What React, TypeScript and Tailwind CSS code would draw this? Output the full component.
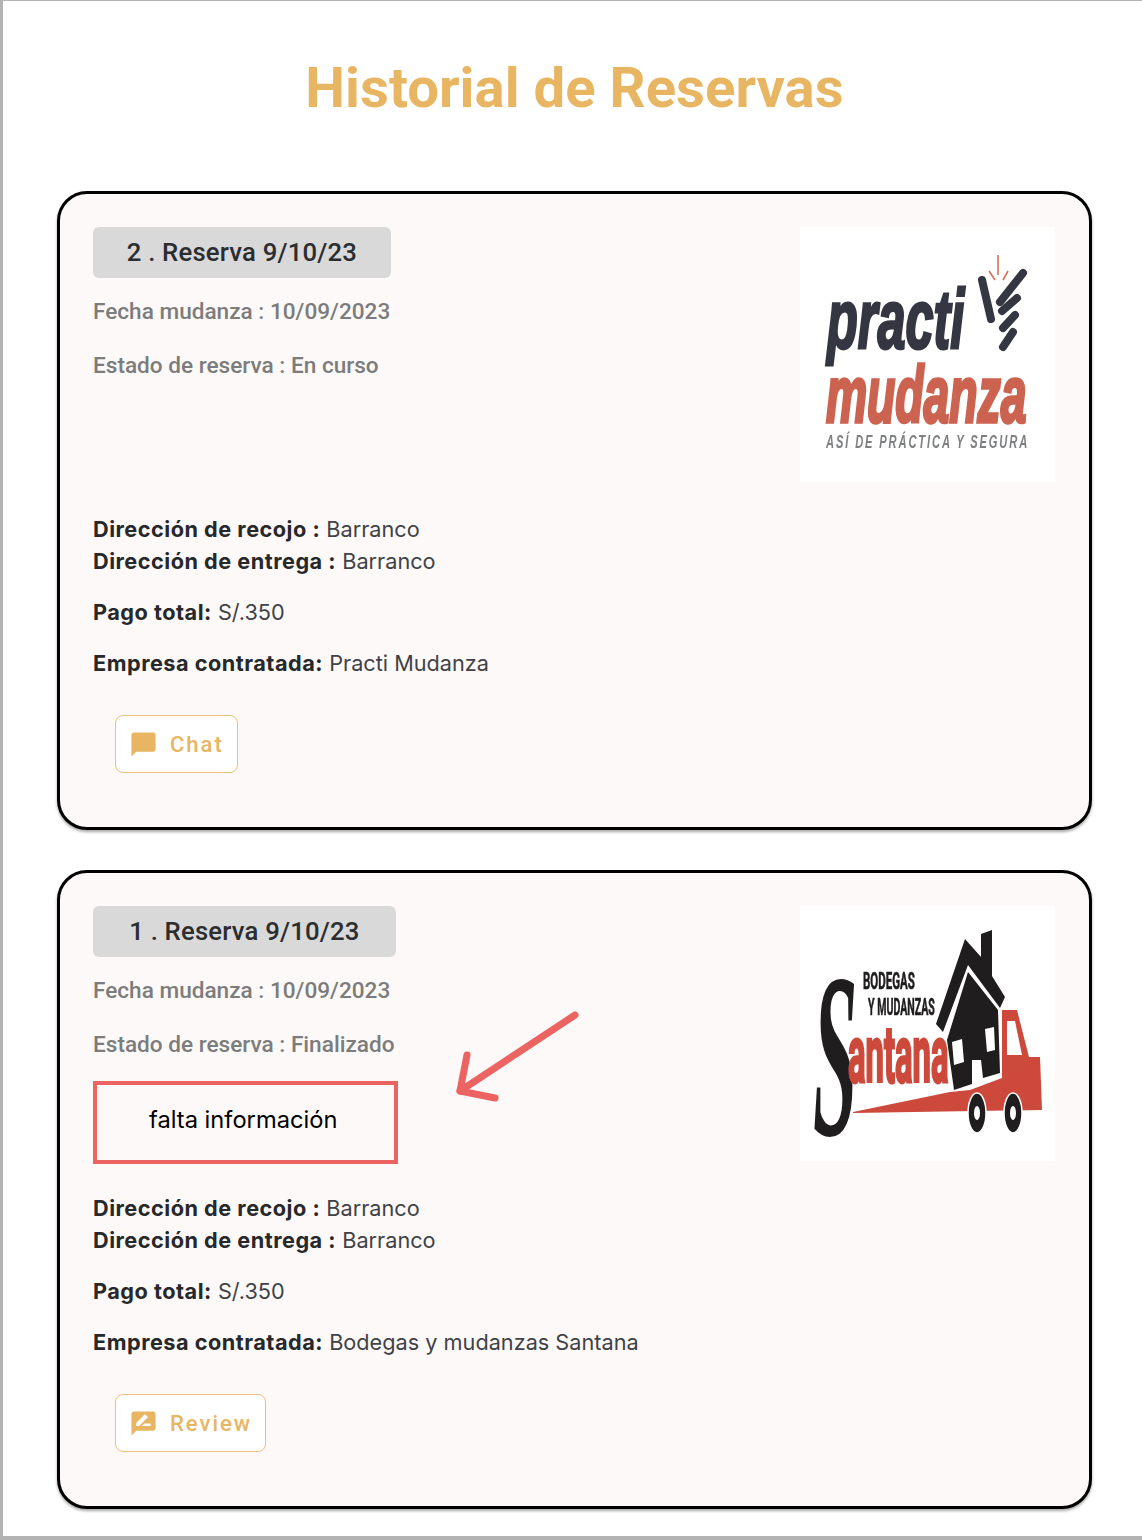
import { MdChatBubble, MdRateReview } from "react-icons/md";
import type { ReactNode } from "react";

function PractiLogo() {
  return (
    <svg viewBox="0 0 255 255" className="h-full w-full blur-[0.4px]">
      <rect width="255" height="255" fill="#fff" />
      <text transform="translate(27 121) scale(0.6 1)" fontFamily="Liberation Sans" fontWeight="700" fontStyle="italic" fontSize="84" fill="#343642" stroke="#343642" strokeWidth="3">practi</text>
      <text transform="translate(26 195) scale(0.578 1)" fontFamily="Liberation Sans" fontWeight="700" fontStyle="italic" fontSize="80" fill="#CC6350" stroke="#CC6350" strokeWidth="3.5">mudanza</text>
      <text transform="translate(26 221) scale(0.62 1)" letterSpacing="3" fontFamily="Liberation Sans" fontWeight="700" fontStyle="italic" fontSize="18" fill="#7d7f80">ASÍ DE PRÁCTICA Y SEGURA</text>
      <g stroke="#343642" strokeWidth="8" strokeLinecap="round" fill="none">
        <path d="M182 53L191 92" />
        <path d="M223 46L200 75" />
        <path d="M217 71L202 84" />
        <path d="M215 88L203 101" />
        <path d="M213 105L203 120" />
      </g>
      <g stroke="#D9705C" strokeWidth="1.6" fill="none">
        <path d="M198 28V48" />
        <path d="M189 44L195 53" />
        <path d="M208 44L203 53" />
      </g>
    </svg>
  );
}

function SantanaLogo() {
  return (
    <svg viewBox="0 0 255 255" className="h-full w-full blur-[0.4px]">
      <rect width="255" height="255" fill="#fff" />
      {/* truck */}
      <path d="M53 206L150 186L170 184L202 172L202 104L217 104L229 151L240 151L242 204L53 207Z" fill="#CC493B" />
      <path d="M207 115L215 115L222 149L207 149Z" fill="#fff" />
      <g fill="#1f1d1e" stroke="#fff" strokeWidth="1.5">
        <ellipse cx="177" cy="207" rx="9" ry="20" />
        <ellipse cx="213" cy="207" rx="9" ry="20" />
      </g>
      <g fill="#fff">
        <ellipse cx="177" cy="207" rx="3" ry="7" />
        <ellipse cx="213" cy="207" rx="3" ry="7" />
      </g>
      {/* house */}
      <path d="M136 118L165 33L181 51L181 28L192 24L192 70L205 91L200 102L168 59L143 126Z" fill="#1f1d1e" />
      <path d="M168 66L198 104L200 167L183 172L181 154L172 154L172 178L154 184L147 134Z" fill="#1f1d1e" />
      <path d="M152 136L162 133L164 156L154 159Z" fill="#fff" />
      <path d="M185 123L194 121L195 144L187 146Z" fill="#fff" />
      <text transform="translate(13 229) scale(0.34 1)" fontFamily="Liberation Serif" fontWeight="700" fontStyle="italic" fontSize="235" fill="#1f1d1e">S</text>
      <text transform="translate(48 176) scale(0.41 1)" fontFamily="Roboto" fontWeight="700" fontSize="80" fill="#CC493B" stroke="#CC493B" strokeWidth="3">antana</text>
      <text transform="translate(63 83) scale(0.5 1)" fontFamily="Roboto" fontWeight="700" fontSize="23" fill="#1f1d1e" stroke="#1f1d1e" strokeWidth="0.6">BODEGAS</text>
      <text transform="translate(68 109) scale(0.46 1)" fontFamily="Roboto" fontWeight="700" fontSize="23" fill="#1f1d1e" stroke="#1f1d1e" strokeWidth="0.6">Y MUDANZAS</text>
    </svg>
  );
}

function Info({ label, value }: { label: string; value: string }) {
  return (
    <p>
      <span className="font-bold tracking-[0.5px] text-[#26282b]">{label}</span> {value}
    </p>
  );
}

function ActionButton({ icon, label }: { icon: ReactNode; label: string }) {
  return (
    <button className="ml-[22px] flex h-[58px] items-center gap-[12px] rounded-lg border border-[#ECC07F] bg-white pr-[13px] pl-[13px] text-[22px] font-medium tracking-[2px] text-[#E8B562]">
      {icon}
      {label}
    </button>
  );
}

function ReservaCard({
  title,
  badgeWidth,
  estado,
  empresa,
  logo,
  action,
  children,
}: {
  title: string;
  badgeWidth: string;
  estado: string;
  empresa: string;
  logo: ReactNode;
  action: ReactNode;
  children?: ReactNode;
}) {
  return (
    <section className="relative flex h-[639px] justify-between rounded-[30px] border-[3px] border-black bg-[#FDF9F8] pt-[33px] pr-[34px] pl-[33px] shadow-[0_2px_3px_rgba(0,0,0,0.35)]">
      <div className="flex flex-col">
        <div className={`${badgeWidth} flex h-[51px] items-center justify-center rounded-md bg-[#D9D9D9] text-[25.7px] font-medium tracking-[0.2px] text-[#2b2d30]`}>
          {title}
        </div>
        <p className="mt-[18px] h-[32px] text-[22.6px] leading-[32px] font-medium text-[#7c7c7c]">Fecha mudanza : 10/09/2023</p>
        <p className="mt-[22px] h-[32px] text-[22.6px] leading-[32px] font-medium text-[#7c7c7c]">Estado de reserva : {estado}</p>
        <div className="mt-[20px] h-[83px]">{children}</div>
        <div className="mt-[28px] font-['Inter',sans-serif] text-[21.7px] leading-[32px] text-[#3f4246]">
          <Info label="Dirección de recojo :" value="Barranco" />
          <Info label="Dirección de entrega :" value="Barranco" />
          <div className="mt-[19px]">
            <Info label="Pago total:" value="S/.350" />
          </div>
          <div className="mt-[19px]">
            <Info label="Empresa contratada:" value={empresa} />
          </div>
        </div>
        <div className="mt-[36px] flex">{action}</div>
      </div>
      <div className="h-[255px] w-[255px] shrink-0">{logo}</div>
    </section>
  );
}

export default function App() {
  return (
    <div className="h-[1540px] overflow-hidden border-t border-b-4 border-l-[3px] border-[#b3b3b3] bg-white pr-[50px] pl-[54px] font-['Roboto',sans-serif]">
      <h1 className="pt-[53px] pb-[69px] text-center text-[56.3px] leading-[68px] font-bold text-[#E8B562]">
        Historial de Reservas
      </h1>
      <div className="flex flex-col gap-[40px]">
        <ReservaCard
          title="2 . Reserva 9/10/23"
          badgeWidth="w-[298px]"
          estado="En curso"
          empresa="Practi Mudanza"
          logo={<PractiLogo />}
          action={<ActionButton icon={<MdChatBubble className="size-[29px]" />} label="Chat" />}
        />
        <ReservaCard
          title="1 . Reserva 9/10/23"
          badgeWidth="w-[303px]"
          estado="Finalizado"
          empresa="Bodegas y mudanzas Santana"
          logo={<SantanaLogo />}
          action={<ActionButton icon={<MdRateReview className="size-[29px]" />} label="Review" />}
        >
          <div className="flex h-[83px] w-[305px] items-center border-4 border-[#EC6462] pb-[5px] pl-[52px] font-['Inter',sans-serif] text-[23.7px] text-black">
            falta información
          </div>
          {/* annotation arrow */}
          <svg className="absolute top-[136px] left-[392px] h-[100px] w-[135px] text-[#EC6462]" viewBox="0 0 135 100" fill="none" stroke="currentColor" strokeWidth="7" strokeLinecap="round" strokeLinejoin="round">
            <path d="M123 6L8 82" />
            <path d="M15 46L8 82L43 89" />
          </svg>
        </ReservaCard>
      </div>
    </div>
  );
}
